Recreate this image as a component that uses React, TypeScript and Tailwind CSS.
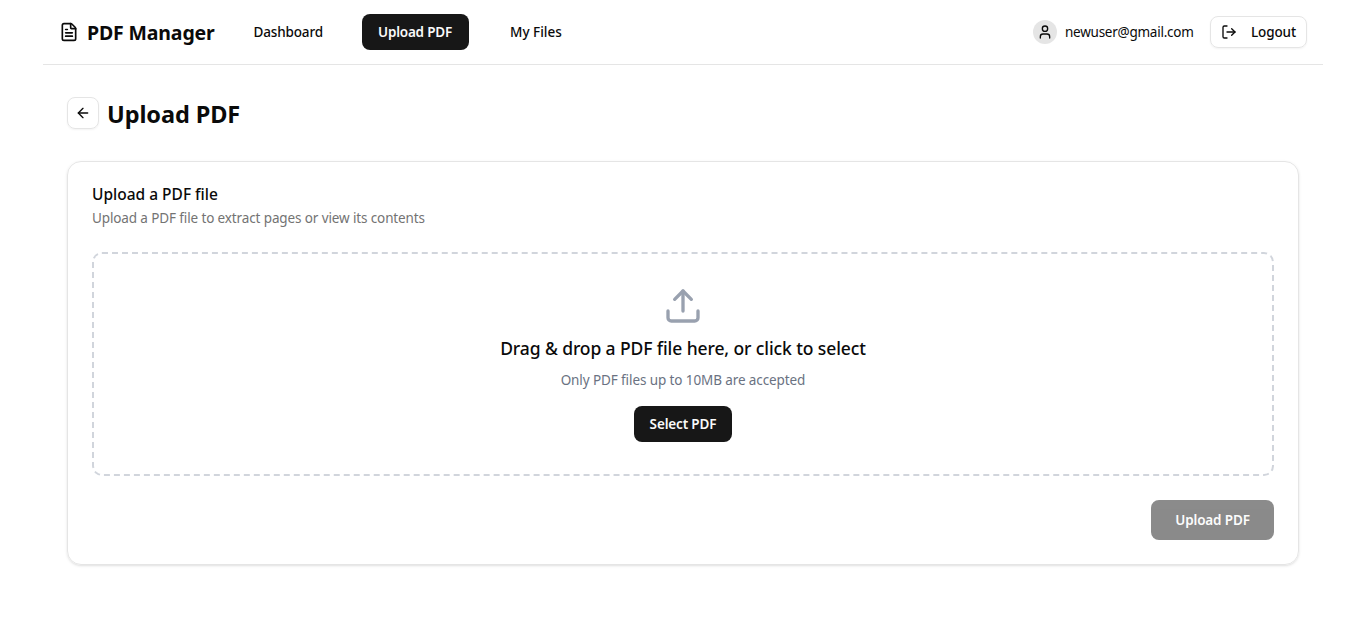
import { FileText, LogOut, User, ArrowLeft, Upload } from "lucide-react";

function Header() {
  return (
    <header className="mx-auto flex h-[65px] w-[1280px] items-center border-b border-[#e5e5e5] px-4">
      <div className="flex w-[155px] items-center gap-2 whitespace-nowrap">
        <FileText className="size-5 shrink-0" />
        <span className="pt-0.5 text-[19.5px] leading-7 font-bold tracking-[-0.15px]">PDF Manager</span>
      </div>
      <nav className="ml-6 flex items-center gap-6 text-[13.5px] leading-5 font-medium whitespace-nowrap">
        <a className="w-[100px] py-2 pl-[15.5px] tracking-[-0.15px]">Dashboard</a>
        <a className="w-[107px] rounded-lg bg-[#171717] py-2 pl-4 font-semibold tracking-[-0.2px] text-[#fafafa]">Upload PDF</a>
        <a className="py-2 pl-[17px]">My Files</a>
      </nav>
      <div className="ml-auto flex items-center gap-4">
        <div className="flex items-center gap-2 text-[13.5px] leading-5">
          <span className="flex size-6 items-center justify-center rounded-full bg-[#e5e5e5]">
            <User className="size-4" />
          </span>
          <span className="w-[129px] tracking-[-0.25px] whitespace-nowrap">newuser@gmail.com</span>
        </div>
        <button className="flex h-8 w-[97px] items-center gap-3.5 rounded-lg border border-[#e5e5e5] pl-2.5 text-[13.5px] leading-5 font-medium tracking-[-0.13px] shadow-xs">
          <LogOut className="size-4 shrink-0" />
          Logout
        </button>
      </div>
    </header>
  );
}

export default function App() {
  return (
    <div className="min-h-[629px] bg-white font-['Noto_Sans',sans-serif] text-[#0a0a0a]">
      <Header />
      <main className="mx-auto w-[1232px] pt-8">
        <div className="flex h-8 items-center gap-2">
          <button className="flex size-8 items-center justify-center rounded-lg border border-[#e5e5e5] shadow-xs">
            <ArrowLeft className="size-4" />
          </button>
          <h1 className="pt-0.5 text-[23.5px] leading-8 font-bold tracking-[-0.1px]">Upload PDF</h1>
        </div>
        <section className="mt-8 h-[404px] rounded-[14px] border border-[#e5e5e5] p-6 shadow-sm">
          <h2 className="text-[15.5px] leading-4 font-medium">Upload a PDF file</h2>
          <p className="mt-1.5 text-[13.5px] leading-5 tracking-[-0.12px] text-[#737373]">
            Upload a PDF file to extract pages or view its contents
          </p>
          <div className="mt-6 flex h-56 flex-col items-center rounded-[10px] border-2 border-dashed border-[#d1d5dc] pt-8">
            <Upload className="size-10 text-[#99a1af]" />
            <p className="mt-2 text-[17.5px] leading-7 font-medium tracking-[-0.1px]">
              Drag &amp; drop a PDF file here, or click to select
            </p>
            <p className="mt-2 text-[13.5px] leading-5 tracking-[-0.1px] text-[#6a7282]">
              Only PDF files up to 10MB are accepted
            </p>
            <button className="mt-4 h-9 w-[98px] rounded-lg bg-[#171717] text-[13.5px] leading-5 font-semibold tracking-[-0.15px] text-[#fafafa]">
              Select PDF
            </button>
          </div>
          <div className="mt-6 flex justify-end">
            <button className="h-10 w-[123px] rounded-lg bg-[#171717] text-[13.5px] leading-5 font-semibold tracking-[-0.15px] text-[#fafafa] opacity-50">
              Upload PDF
            </button>
          </div>
        </section>
      </main>
    </div>
  );
}
